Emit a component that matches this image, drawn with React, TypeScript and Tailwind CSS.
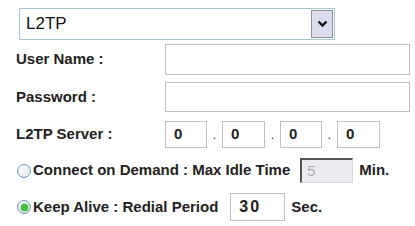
// L2TP 연결 설정 폼 (라우터 관리 화면 스타일)
const FONT = "font-['Liberation_Sans',Arial,sans-serif]";

function Field({ w, value = "", bold = true }: { w: string; value?: string; bold?: boolean }) {
  return (
    <div
      className={`flex items-center border border-[#b9c3c6] bg-white px-[8px] text-[15px] text-[#222] ${w} ${
        bold ? "font-bold" : ""
      }`}
    >
      {value}
    </div>
  );
}

function Radio({ checked }: { checked?: boolean }) {
  return (
    <span className="grid h-[14px] w-[14px] shrink-0 place-items-center rounded-full border border-[#6f94b8] bg-gradient-to-br from-white to-[#dfe6ee]">
      {checked && <span className="h-[7px] w-[7px] rounded-full bg-[#3ec43a] shadow-[0_0_2px_#1f8a1f]" />}
    </span>
  );
}

export default function App() {
  return (
    <div className={`h-[226px] w-[415px] bg-white ${FONT} text-[#222]`}>
      {/* 연결 방식 선택 */}
      <div className="ml-[19px] mt-[8px] flex h-[32px] w-[316px] border border-[#a9c4d6] bg-white">
        <div className="flex flex-1 items-center pl-[6px] text-[17px] text-[#111]">L2TP</div>
        <div className="my-[1px] mr-[1px] grid w-[22px] place-items-center border border-[#8d8fa3] bg-[#dcdcef]">
          <svg width="11" height="8" viewBox="0 0 11 8">
            <path d="M1.5 1.5 L5.5 5.5 L9.5 1.5" fill="none" stroke="#111" strokeWidth="2.4" />
          </svg>
        </div>
      </div>

      <div className="mt-[4px] grid grid-cols-[149px_1fr] items-center gap-y-[7px] pl-[16px] text-[15px] font-bold">
        <span>User Name :</span>
        <div className="flex h-[31px]">
          <Field w="w-[245px]" />
        </div>

        <span>Password :</span>
        <div className="flex h-[30px]">
          <Field w="w-[245px]" />
        </div>

        <span className="mt-[2px]">L2TP Server :</span>
        <div className="mt-[2px] flex h-[27px] items-stretch">
          <Field w="w-[42px]" value="0" />
          <span className="flex w-[15px] items-end justify-center pb-[4px] text-[12px] font-normal">.</span>
          <Field w="w-[43px]" value="0" />
          <span className="flex w-[15px] items-end justify-center pb-[4px] text-[12px] font-normal">.</span>
          <Field w="w-[42px]" value="0" />
          <span className="flex w-[15px] items-end justify-center pb-[4px] text-[12px] font-normal">.</span>
          <Field w="w-[43px]" value="0" />
        </div>
      </div>

      {/* 연결 유지 옵션 */}
      <div className="mt-[10px] flex h-[25px] items-center pl-[17px] text-[15px] font-bold">
        <Radio />
        <span className="ml-[2px]">Connect on Demand : Max Idle Time</span>
        <div className="ml-[10px] flex h-[25px] w-[53px] items-center border-t-2 border-l-2 border-b border-r border-t-[#555] border-l-[#555] border-b-[#d8d8d8] border-r-[#d8d8d8] bg-[#ececf0] pl-[5px] text-[15px] font-normal text-[#aab]">
          5
        </div>
        <span className="ml-[6px]">Min.</span>
      </div>

      <div className="mt-[10px] flex h-[28px] items-center pl-[17px] text-[15px] font-bold">
        <Radio checked />
        <span className="ml-[2px]">Keep Alive : Redial Period</span>
        <div className="ml-[12px] flex h-[28px] w-[55px] items-center border border-[#b9c3c6] bg-white pl-[8px] text-[16px] tracking-[2px]">
          30
        </div>
        <span className="ml-[6px]">Sec.</span>
      </div>
    </div>
  );
}
